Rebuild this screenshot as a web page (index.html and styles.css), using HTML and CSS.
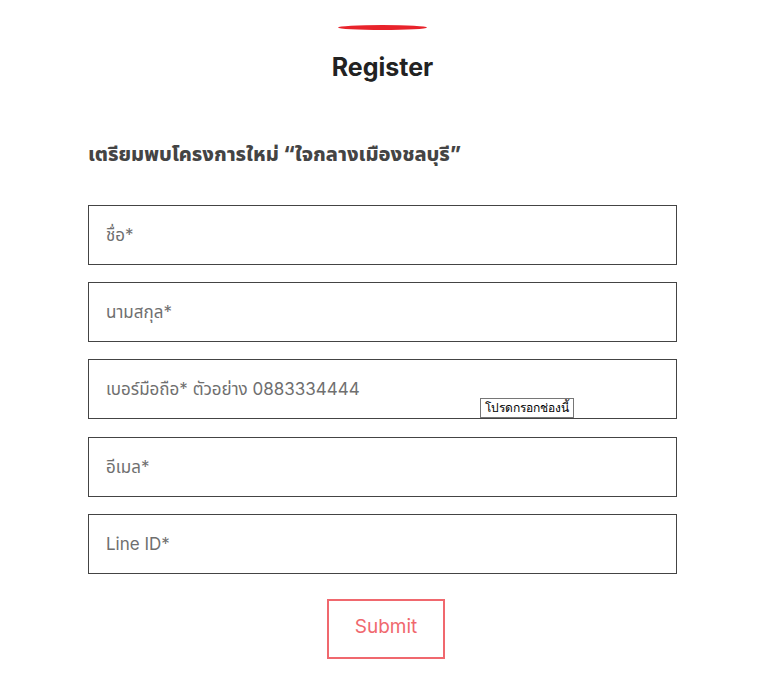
FILE: index.html
```html
<!DOCTYPE html>
<html lang="th">
<head>
  <meta charset="UTF-8" />
  <title>Register</title>
  <meta name="viewport" content="width=device-width, initial-scale=1.0" />
  <link rel="stylesheet" href="styles.css">
</head>
<body>

  <div class="register">
    <div class="accent" aria-hidden="true"></div>
    <h1>Register</h1>

    <h2>เตรียมพบโครงการใหม่ “ใจกลางเมืองชลบุรี”</h2>

    <form class="reg-form" autocomplete="off">
      <input type="text" placeholder="ชื่อ*" />
      <input type="text" placeholder="นามสกุล*" />
      <div class="field">
        <input type="tel" placeholder="เบอร์มือถือ* ตัวอย่าง 0883334444" />
        <span class="tip">โปรดกรอกช่องนี้</span>
      </div>
      <input type="email" placeholder="อีเมล*" />
      <input type="text" placeholder="Line ID*" />

      <button type="submit">Submit</button>
    </form>
  </div>

</body>
</html>
```

FILE: styles.css
```css
/* RESET */
* {
  margin: 0;
  padding: 0;
  box-sizing: border-box;
}

body {
  background: #fff;
  font-family: 'Inter', 'Noto Sans', 'Noto Sans Thai', sans-serif;
  color: #222;
}

.register {
  width: 589px;
  margin-left: 88px;
  padding-top: 25px;
}

.accent {
  width: 89px;
  height: 5px;
  margin-left: 250px;
  background: #e8232b;
  border-radius: 50%;
}

h1 {
  margin-top: 22px;
  text-align: center;
  font-size: 25px;
  font-weight: 700;
  color: #222;
}

h2 {
  margin-top: 58px;
  font-size: 20px;
  font-weight: 800;
  color: #444;
}

.reg-form {
  margin-top: 35px;
  display: flex;
  flex-direction: column;
  gap: 17.2px;
}

.field {
  position: relative;
}

input {
  display: block;
  width: 100%;
  height: 60px;
  padding: 0 17px;
  border: 1px solid #444;
  border-radius: 0;
  font-family: inherit;
  font-size: 17px;
  color: #333;
  background: #fff;
}

input::placeholder {
  color: #6f6f6f;
}

.tip {
  position: absolute;
  left: 392px;
  top: 39px;
  padding: 1px 4px 1px;
  border: 1px solid #767676;
  background: #fff;
  color: #000;
  font-family: 'Tahoma', 'DejaVu Sans', sans-serif;
  font-size: 12px;
  line-height: 16px;
}

button {
  align-self: center;
  margin-top: 8px;
  margin-left: 7px;
  width: 118px;
  height: 60px;
  padding-bottom: 4px;
  border: 2px solid #f0686e;
  background: #fff;
  color: #f0686e;
  font-family: inherit;
  font-size: 19px;
  cursor: pointer;
}
```
